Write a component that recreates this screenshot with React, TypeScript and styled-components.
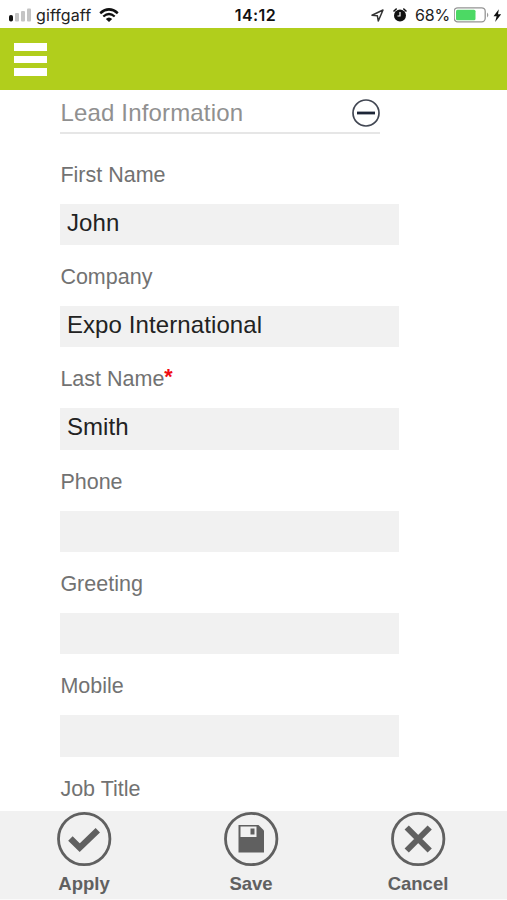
import React from "react";
import styled, { createGlobalStyle } from "styled-components";

const GlobalStyle = createGlobalStyle`
  * { box-sizing: border-box; }
  html, body { margin: 0; padding: 0; background: #fff; overflow: hidden; }
  body { font-family: "Liberation Sans", Arial, sans-serif; }
`;

const Screen = styled.div`
  width: 507px;
  height: 900px;
  display: flex;
  flex-direction: column;
  overflow: hidden;
  background: #fff;
`;

const StatusBar = styled.header`
  flex: none;
  height: 28px;
  padding: 2px 6px 0 8px;
  display: grid;
  grid-template-columns: 1fr auto 1fr;
  align-items: center;
  font-family: Inter, sans-serif;
  font-size: 16px;
  line-height: 24px;
  color: #222;
`;

const StatusGroup = styled.div<{ $end?: boolean }>`
  display: flex;
  align-items: center;
  justify-content: ${(p) => (p.$end ? "flex-end" : "flex-start")};
`;

const Carrier = styled.span`
  margin: 0 8px 0 4px;
  font-size: 16px;
  letter-spacing: 0.1px;
`;

const Clock = styled.time`
  padding-left: 2px;
  font-size: 16px;
  font-weight: 600;
  letter-spacing: 0.45px;
  color: #111;
`;

const Percent = styled.span`
  margin: 0 4px 0 8px;
  font-size: 16px;
  letter-spacing: -0.15px;
`;

const Icon = styled.svg<{ $gap?: number }>`
  display: block;
  flex: none;
  margin-left: ${(p) => p.$gap ?? 0}px;
`;

const NavBar = styled.nav`
  flex: none;
  height: 62px;
  padding: 15px 14px;
  background: #b1ce1c;
`;

const MenuButton = styled.button`
  width: 33px;
  padding: 0;
  border: 0;
  background: none;
  display: flex;
  flex-direction: column;
  gap: 5px;
`;

const MenuLine = styled.span`
  height: 7.5px;
  width: 100%;
  background: #fff;
`;

const Form = styled.main`
  flex: 1;
  min-height: 0;
  overflow: hidden;
  padding: 6px 108px 0 60.4px;
`;

const SectionHeader = styled.div`
  width: 320px;
  height: 37.5px;
  padding-top: 2px;
  display: flex;
  justify-content: space-between;
  align-items: flex-start;
  border-bottom: 2px solid #e6e6e6;
`;

const SectionTitle = styled.h1`
  margin: 0;
  font-size: 24px;
  line-height: 30px;
  font-weight: 400;
  letter-spacing: 0.17px;
  color: #909090;
`;

const Fields = styled.div`
  padding-top: 26px;
`;

const Field = styled.label`
  display: block;
  height: 102.35px;
`;

const FieldName = styled.span`
  display: block;
  height: 44px;
  font-size: 21.5px;
  line-height: 30px;
  color: #727272;
`;

const Required = styled.span`
  display: inline-block;
  line-height: 20px;
  vertical-align: 2px;
  color: #f00a12;
  font-weight: 700;
`;

const Input = styled.input`
  display: block;
  width: 338.5px;
  height: 41.5px;
  padding: 0 6.5px 3px;
  border: 0;
  border-radius: 0;
  outline: 0;
  background: #f1f1f1;
  color: #222;
  font-family: inherit;
  font-size: 24px;
  letter-spacing: 0.1px;
`;

const ActionBar = styled.footer`
  flex: none;
  height: 89px;
  padding: 0 5.5px 0 0.5px;
  display: grid;
  grid-template-columns: repeat(3, 1fr);
  background: #f1f1f1;
  border-bottom: 1px solid #fafafa;
`;

const Action = styled.button`
  padding: 0;
  border: 0;
  background: none;
  display: flex;
  flex-direction: column;
  align-items: center;
  font-family: inherit;
  font-size: 18.5px;
  line-height: 24px;
  font-weight: 700;
  color: #606060;
`;

const ActionLabel = styled.span`
  margin-top: 5px;
`;

const fields = [
  { name: "First Name", value: "John" },
  { name: "Company", value: "Expo International" },
  { name: "Last Name", value: "Smith", required: true },
  { name: "Phone", value: "" },
  { name: "Greeting", value: "" },
  { name: "Mobile", value: "" },
  { name: "Job Title", value: "" },
];

const actions = [
  { label: "Apply", glyph: <path d="M13.4 27.4 22.7 36.7 40.8 19.3" fill="none" stroke="#606060" strokeWidth="6.3" /> },
  {
    label: "Save",
    glyph: (
      <>
        <path d="M14.5 14H34.5L40 19.5V41.5H14.5Z" fill="#606060" />
        <path d="M16.5 15.5H32.5V26H16.5Z" fill="#f1f1f1" />
        <path d="M26.5 17.5H30.5V23.5H26.5Z" fill="#606060" />
      </>
    ),
  },
  { label: "Cancel", glyph: <path d="M15.7 16.5 38.7 39.5M38.7 16.5 15.7 39.5" fill="none" stroke="#606060" strokeWidth="6" /> },
];

export default function App() {
  return (
    <>
      <GlobalStyle />
      <Screen>
        <StatusBar>
          <StatusGroup>
            <Icon width="24" height="15" viewBox="0 0 24 15">
              <rect x="1" y="7" width="4" height="6.5" rx="1.8" fill="#111" />
              <rect x="7" y="5" width="4" height="8.5" rx="1" fill="#c4c4c4" />
              <rect x="13" y="3" width="4" height="10.5" rx="1" fill="#c4c4c4" />
              <rect x="19" y="0.5" width="4" height="13" rx="1" fill="#c4c4c4" />
            </Icon>
            <Carrier>giffgaff</Carrier>
            <Icon width="20" height="15" viewBox="0 0 20 15" fill="none" stroke="#111">
              <path d="M1.2 5.2Q10-2.5 18.8 5.2" strokeWidth="2.5" />
              <path d="M4.3 8.5Q10 3.6 15.7 8.5" strokeWidth="2.3" />
              <path d="M6.8 11Q10 8 13.2 11L10 14Z" fill="#111" stroke="none" />
            </Icon>
          </StatusGroup>
          <Clock>14:12</Clock>
          <StatusGroup $end>
            <Icon width="13" height="13" viewBox="0 0 13 13">
              <path d="M1 6.3 12 1 7.3 12 6.4 6.8Z" fill="none" stroke="#333" strokeWidth="1.5" strokeLinejoin="round" />
            </Icon>
            <Icon $gap={9} width="14" height="14" viewBox="0 0 14 14">
              <circle cx="7" cy="7.5" r="6" fill="#111" />
              <path d="M1 3 3.2 1M10.8 1 13 3" stroke="#111" strokeWidth="1.6" strokeLinecap="round" />
              <path d="M7 4V8H4.5" fill="none" stroke="#fff" strokeWidth="1.2" />
            </Icon>
            <Percent>68%</Percent>
            <Icon width="36" height="16" viewBox="0 0 36 16">
              <rect x="0.2" y="0.8" width="31" height="14" rx="3.5" fill="#fff" stroke="#949494" strokeWidth="1.3" />
              <rect x="2" y="2.8" width="19.5" height="10.5" rx="1.5" fill="#4cd964" />
              <path d="M33 5.5Q35.7 8 33 10.5Z" fill="#999" />
            </Icon>
            <Icon $gap={2.5} width="8.5" height="13" viewBox="0 0 8 12">
              <path d="M5.5 0 0.5 6.7H3.4L2 12 7.7 4.8H4.7Z" fill="#111" />
            </Icon>
          </StatusGroup>
        </StatusBar>
        <NavBar>
          <MenuButton aria-label="Menu">
            <MenuLine />
            <MenuLine />
            <MenuLine />
          </MenuButton>
        </NavBar>
        <Form>
          <SectionHeader>
            <SectionTitle>Lead Information</SectionTitle>
            <Icon width="28" height="30" viewBox="0 0 28 30" fill="none">
              <circle cx="14" cy="15" r="13" stroke="#424753" strokeWidth="1.7" />
              <path d="M5 15H23" stroke="#1d2638" strokeWidth="2.8" />
            </Icon>
          </SectionHeader>
          <Fields>
            {fields.map((f) => (
              <Field key={f.name}>
                <FieldName>
                  {f.name}
                  {f.required && <Required>*</Required>}
                </FieldName>
                <Input defaultValue={f.value} />
              </Field>
            ))}
          </Fields>
        </Form>
        <ActionBar>
          {actions.map((a) => (
            <Action key={a.label}>
              <Icon width="55" height="56" viewBox="0 0 55 56">
                <circle cx="27.2" cy="28" r="25.7" fill="none" stroke="#606060" strokeWidth="2.8" />
                {a.glyph}
              </Icon>
              <ActionLabel>{a.label}</ActionLabel>
            </Action>
          ))}
        </ActionBar>
      </Screen>
    </>
  );
}
